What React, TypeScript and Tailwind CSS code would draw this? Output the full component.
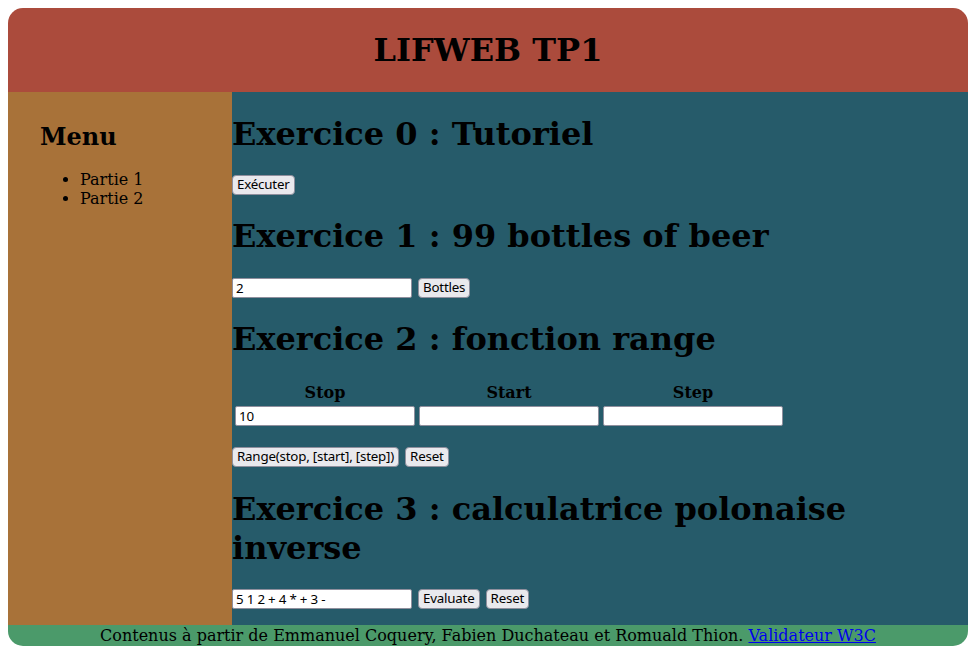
import React from "react";

const serif = { fontFamily: '"DejaVu Serif", serif' };

function Btn({ children }: { children: React.ReactNode }) {
  return (
    <button className="h-[20px] px-[4px] text-[13.33px] tracking-[-0.2px] leading-none bg-[#e9e9ed] border border-[#8f8f9d] rounded-[4px] text-black font-['Noto_Sans',sans-serif]">
      {children}
    </button>
  );
}

function Input({ value, w = "w-[180px]" }: { value?: string; w?: string }) {
  return (
    <input
      readOnly
      value={value ?? ""}
      className={`${w} h-[20px] px-[3px] text-[13.33px] tracking-[-0.2px] bg-white border border-[#8f8f9d] rounded-[2px] text-black font-['Noto_Sans',sans-serif] outline-none`}
    />
  );
}

export default function App() {
  return (
    <div className="p-2 bg-white" style={serif}>
      <div className="flex flex-col w-[960px]">
        <header className="h-[84px] bg-[#ab4b3c] rounded-t-[15px] flex items-center justify-center">
          <h1 className="text-[32px] font-bold text-black">LIFWEB TP1</h1>
        </header>
        <div className="flex">
          <nav className="w-[224px] bg-[#a87239] pl-[32px] pt-[31px]">
            <h2 className="text-[24px] font-bold leading-[28px]">Menu</h2>
            <ul className="list-disc pl-[40px] mt-[19px] text-[16px] leading-[19px]">
              <li>Partie 1</li>
              <li>Partie 2</li>
            </ul>
          </nav>
          <main className="flex-1 bg-[#265b6a] pb-[16px]">
            <h2 className="text-[32px] font-bold leading-[37px] mt-[24px] mb-[22px]">Exercice 0 : Tutoriel</h2>
            <div className="flex">
              <Btn>Exécuter</Btn>
            </div>
            <h2 className="text-[32px] font-bold leading-[37px] mt-[23px] mb-[23px]">Exercice 1 : 99 bottles of beer</h2>
            <div className="flex gap-[6px]">
              <Input value="2" />
              <Btn>Bottles</Btn>
            </div>
            <h2 className="text-[32px] font-bold leading-[37px] mt-[23px] mb-[25px]">Exercice 2 : fonction range</h2>
            <div className="flex gap-[4px] pl-[3px]">
              {[
                ["Stop", "10"],
                ["Start", ""],
                ["Step", ""],
              ].map(([label, v]) => (
                <div key={label} className="flex flex-col items-center">
                  <div className="text-[16px] font-bold leading-[19px]">{label}</div>
                  <div className="mt-[2px]">
                    <Input value={v} />
                  </div>
                </div>
              ))}
            </div>
            <div className="flex gap-[6px] mt-[19px]">
              <Btn>Range(stop, [start], [step])</Btn>
              <Btn>Reset</Btn>
            </div>
            <h2 className="text-[32px] font-bold leading-[39px] mt-[23px] mb-[21px]">
              Exercice 3 : calculatrice polonaise inverse
            </h2>
            <div className="flex gap-[6px]">
              <Input value="5 1 2 + 4 * + 3 -" />
              <Btn>Evaluate</Btn>
              <Btn>Reset</Btn>
            </div>
          </main>
        </div>
        <footer className="h-[21px] bg-[#4b9a6a] rounded-b-[15px] text-center text-[16px] leading-[21px]">
          Contenus à partir de Emmanuel Coquery, Fabien Duchateau et Romuald Thion.{" "}
          <a href="#" className="text-[#0000ee] underline">Validateur W3C</a>
        </footer>
      </div>
    </div>
  );
}
